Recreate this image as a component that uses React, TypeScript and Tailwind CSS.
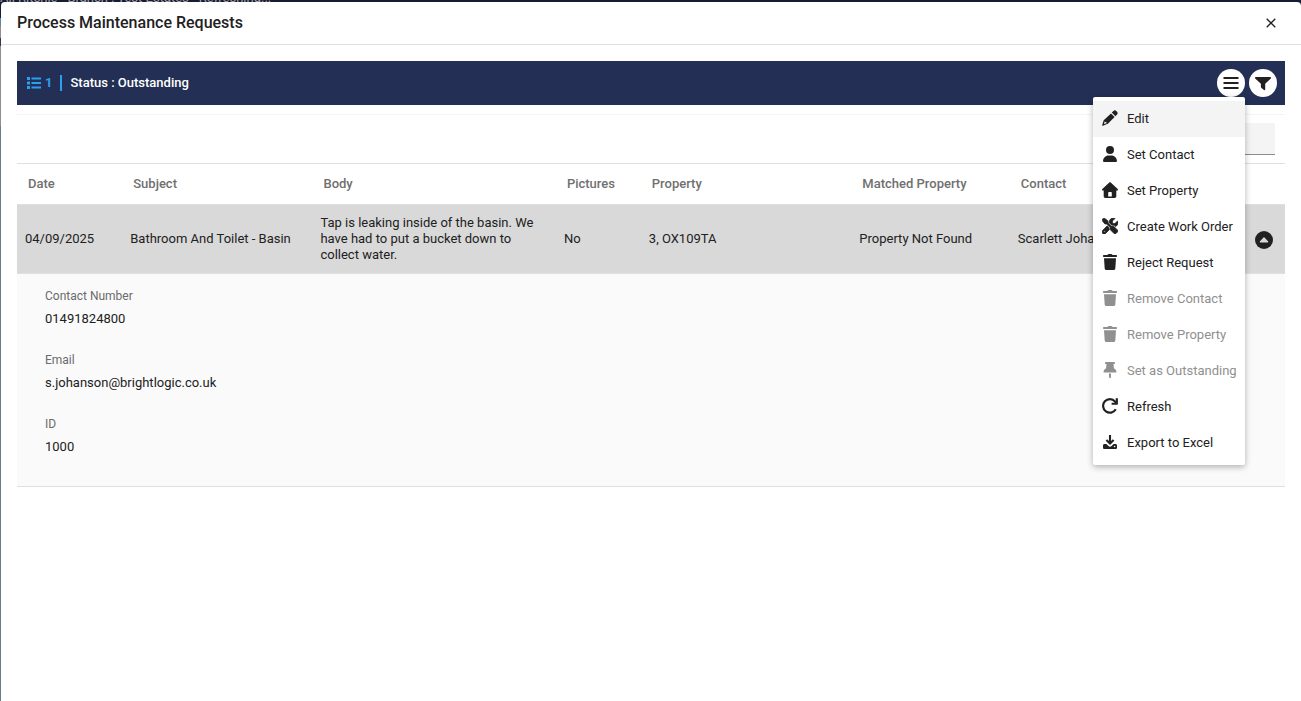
import type { ReactNode } from "react";
import { FaUser, FaScrewdriverWrench } from "react-icons/fa6";

function Glyph({ children, size = 16 }: { children: ReactNode; size?: number }) {
  return (
    <svg viewBox="0 0 16 16" width={size} height={size} fill="currentColor" aria-hidden="true">
      {children}
    </svg>
  );
}

const pencil = (
  <Glyph>
    <path d="M11.200 1.200a2.300 2.300 0 0 1 3.300 0l.3.300a2.300 2.300 0 0 1 0 3.300L13.400 6.200 9.800 2.600ZM9 3.400 12.600 7l-6.500 6.400c-.3.300-.7.500-1.100.700l-4 1.700c-.5.200-.9-.2-.8-.7l1.300-4.300c.1-.4.400-.8.700-1.100Zm-6.300 8.200-.8 2.500 2.500-.9v-1.100H3.300Z" fillRule="evenodd" />
  </Glyph>
);

const house = (
  <Glyph>
    <path d="M7.300.400a1 1 0 0 1 1.400 0l7 6.600c.6.600.2 1.600-.7 1.600h-.7v5.600c0 1-.7 1.700-1.700 1.700H3.400c-1 0-1.700-.7-1.700-1.700V8.600H1C.1 8.600-.3 7.600.3 7ZM7 10c-.5 0-.8.300-.8.800v3.600h3.600v-3.600c0-.5-.3-.8-.8-.8Z" fillRule="evenodd" />
  </Glyph>
);

const trash = (
  <Glyph>
    <path d="M5.800.500C6 .2 6.300 0 6.700 0h2.600c.4 0 .7.200.9.500l.4.600h3.500a.9.900 0 0 1 0 2H1.900a.9.900 0 0 1 0-2h3.500ZM2 4.300h12l-.7 10.200c-.1.800-.7 1.500-1.600 1.500H4.300c-.9 0-1.500-.7-1.600-1.500Z" />
  </Glyph>
);

const pin = (
  <Glyph>
    <path d="M3.200 0h9.600v2h-1.300l.4 4.300c1.500.8 2.400 2 2.600 3.600 0 .4-.3.700-.7.700H2.200c-.4 0-.7-.3-.7-.7.200-1.600 1.100-2.800 2.600-3.600L4.500 2H3.200ZM7 11.600h2V15a1 1 0 0 1-2 0Z" />
  </Glyph>
);

const refresh = (
  <Glyph>
    <path d="M13.800 11.300A6.800 6.800 0 1 1 13 3.400l1.400 1.500" fill="none" stroke="currentColor" strokeWidth="2.200" />
    <path d="M15.900.300v5.800c0 .4-.3.700-.7.700H9.600V4.800h4.100V.3Z" />
  </Glyph>
);

const download = (
  <Glyph>
    <path d="M8 1v8M4.400 5.900 8 9.500l3.600-3.600" fill="none" stroke="currentColor" strokeWidth="2.100" />
    <path
      fillRule="evenodd"
      d="M2.600 10h1.800L6.500 12a2.200 2.200 0 0 0 3 0l2.100-2h1.800c1 0 1.600.7 1.600 1.600v1.800c0 .9-.6 1.600-1.600 1.600H2.600C1.600 15 1 14.300 1 13.400v-1.800c0-.9.6-1.600 1.600-1.600Zm10 1.700a.8.800 0 1 0 0 1.600.8.8 0 0 0 0-1.600Z"
    />
  </Glyph>
);

const tools = <FaScrewdriverWrench stroke="currentColor" strokeWidth={24} />;

type Item = { label: string; icon: ReactNode; active?: boolean; disabled?: boolean };

const items: Item[] = [
  { label: "Edit", icon: pencil, active: true },
  { label: "Set Contact", icon: <FaUser /> },
  { label: "Set Property", icon: house },
  { label: "Create Work Order", icon: tools },
  { label: "Reject Request", icon: trash },
  { label: "Remove Contact", icon: trash, disabled: true },
  { label: "Remove Property", icon: trash, disabled: true },
  { label: "Set as Outstanding", icon: pin, disabled: true },
  { label: "Refresh", icon: refresh },
  { label: "Export to Excel", icon: download },
];

function ActionsMenu() {
  return (
    <div
      role="menu"
      className="absolute top-full right-0 z-10 flex w-[152px] flex-col rounded-[2px] bg-white py-1 shadow-[0_2px_6px_rgba(0,0,0,0.3)]"
    >
      {items.map((item) => (
        <button
          key={item.label}
          type="button"
          role="menuitem"
          disabled={item.disabled}
          className={`flex h-9 items-center gap-2 pl-2 text-left text-[13px] whitespace-nowrap ${
            item.active ? "bg-[#f4f4f4]" : ""
          } ${item.disabled ? "text-[#909090]" : "text-[#212121]"}`}
        >
          <span className="flex w-[18px] shrink-0 justify-center pb-0.5 text-[16px]">{item.icon}</span>
          {item.label}
        </button>
      ))}
    </div>
  );
}

const columns = ["Date", "Subject", "Body", "Pictures", "Property", "Matched Property", "Contact"];

const details = [
  { label: "Contact Number", value: "01491824800" },
  { label: "Email", value: "s.johanson@brightlogic.co.uk" },
  { label: "ID", value: "1000" },
];

export default function App() {
  return (
    <div className="flex min-h-screen flex-col bg-[#171c36] font-[Roboto,sans-serif] text-[13px] text-[#212121]">
      <div className="flex h-[2px] items-end overflow-hidden leading-2 whitespace-nowrap text-[#a5a5a5]">
        Ali Ritchie - Branch : Test Estates - Refreshing...
      </div>
      <div className="flex grow">
        <div className="flex w-px shrink-0 flex-col">
          <div className="h-4 bg-[#171c36]" />
          <div className="h-2 bg-[#5b86a8]" />
          <div className="h-3 bg-[#8f8f8f]" />
          <div className="h-2 bg-[#3c3350]" />
          <div className="h-20 bg-[#8f8f8f]" />
          <div className="grow bg-[#667c8f]" />
        </div>
        <main className="min-w-0 grow basis-0 rounded-t-[4px] bg-white">
          <header className="flex h-[43px] items-center justify-between border-b border-[#e0e0e0] px-4">
            <h1 className="text-[16px] font-medium">Process Maintenance Requests</h1>
            <button type="button" aria-label="Close" className="flex size-7 items-center justify-center">
              <svg viewBox="0 0 10 10" width="10" height="10" aria-hidden="true">
                <path d="M.7.700l8.600 8.600M9.300.700L.7 9.300" stroke="#212121" strokeWidth="1.300" fill="none" />
              </svg>
            </button>
          </header>

          <div className="p-4">
            <div className="flex h-11 items-center bg-[#232f54] px-2 text-white">
              <svg viewBox="0 0 14 12" width="14" height="12" fill="#2b9ff0" className="mr-1 ml-0.5" aria-hidden="true">
                <path d="M0 0h3v3H0zM0 4.500h3v3H0zM0 9h3v3H0zM4.500.5H14v2H4.500zM4.500 5H14v2H4.500zM4.500 9.500H14v2H4.500z" />
              </svg>
              <span className="font-bold text-[#2b9ff0]">1</span>
              <span className="mx-2 h-4 w-[2px] bg-[#2b9ff0]" />
              <span className="font-medium">Status : Outstanding</span>
              <div className="ml-auto flex gap-1">
                <div className="relative">
                  <button
                    type="button"
                    aria-label="Actions"
                    className="flex size-7 items-center justify-center rounded-full bg-white text-[#212121]"
                  >
                    <Glyph>
                      <path d="M.5 2h15v2H.5zM.5 7h15v2H.5zM.5 12h15v2H.5z" />
                    </Glyph>
                  </button>
                  <ActionsMenu />
                </div>
                <button
                  type="button"
                  aria-label="Filter"
                  className="flex size-7 items-center justify-center rounded-full bg-white text-[#212121]"
                >
                  <Glyph>
                    <path d="M.8 2h14.400c.8 0 1.100.9.600 1.400L10.200 8.800v5.600c0 .7-.7 1-1.200.600l-2.500-2c-.4-.3-.6-.7-.6-1.200v-3L.2 3.400C-.3 2.900 0 2 .8 2Z" />
                  </Glyph>
                </button>
              </div>
            </div>

            <div className="mt-[9px] flex h-[50px] items-start justify-end border-t border-b border-t-[#f4f4f4] border-b-[#e0e0e0] px-[10px] pt-2">
              <input
                type="search"
                aria-label="Search"
                className="h-8 w-[180px] rounded-t-[2px] border-b border-[#8c8c8c] bg-[#f4f4f4] px-2"
              />
            </div>

            <table className="w-full table-fixed border-collapse text-left">
              <colgroup>
                <col className="w-[8.3%]" />
                <col className="w-[15%]" />
                <col className="w-[19.2%]" />
                <col className="w-[6.7%]" />
                <col className="w-[16.6%]" />
                <col className="w-[12.5%]" />
                <col />
                <col className="w-[42px]" />
              </colgroup>
              <thead>
                <tr className="h-10">
                  {columns.map((name) => (
                    <th key={name} className="px-[11px] font-medium text-[#707070]">
                      {name}
                    </th>
                  ))}
                  <th aria-label="Details" />
                </tr>
              </thead>
              <tbody>
                <tr className="h-[69px] border-y border-[#e0e0e0] bg-[#d9d9d9] leading-4">
                  <td className="px-2">04/09/2025</td>
                  <td className="px-2">Bathroom And Toilet - Basin</td>
                  <td className="px-2">Tap is leaking inside of the basin. We have had to put a bucket down to collect water.</td>
                  <td className="px-2">No</td>
                  <td className="px-2">3, OX109TA</td>
                  <td className="px-2">Property Not Found</td>
                  <td className="px-2">Scarlett Johanson</td>
                  <td>
                    <button type="button" aria-label="Collapse details" className="mt-0.5 ml-3 flex">
                      <svg viewBox="0 0 18 18" width="18" height="18" aria-hidden="true">
                        <circle cx="9" cy="9" r="9" fill="#212121" />
                        <path d="M9 6l4.200 4.500c.3.400.1.900-.4.900H5.200c-.5 0-.7-.5-.4-.9Z" fill="#d9d9d9" />
                      </svg>
                    </button>
                  </td>
                </tr>
                <tr className="border-b border-[#e0e0e0] bg-[#fafafa]">
                  <td colSpan={8} className="px-7 pt-[10px] pb-7">
                    <dl className="flex flex-col gap-[18px]">
                      {details.map((d) => (
                        <div key={d.label}>
                          <dt className="text-[12px] leading-6 text-[#6b6b6b]">{d.label}</dt>
                          <dd className="leading-[22px]">{d.value}</dd>
                        </div>
                      ))}
                    </dl>
                  </td>
                </tr>
              </tbody>
            </table>
          </div>
        </main>
      </div>
    </div>
  );
}
